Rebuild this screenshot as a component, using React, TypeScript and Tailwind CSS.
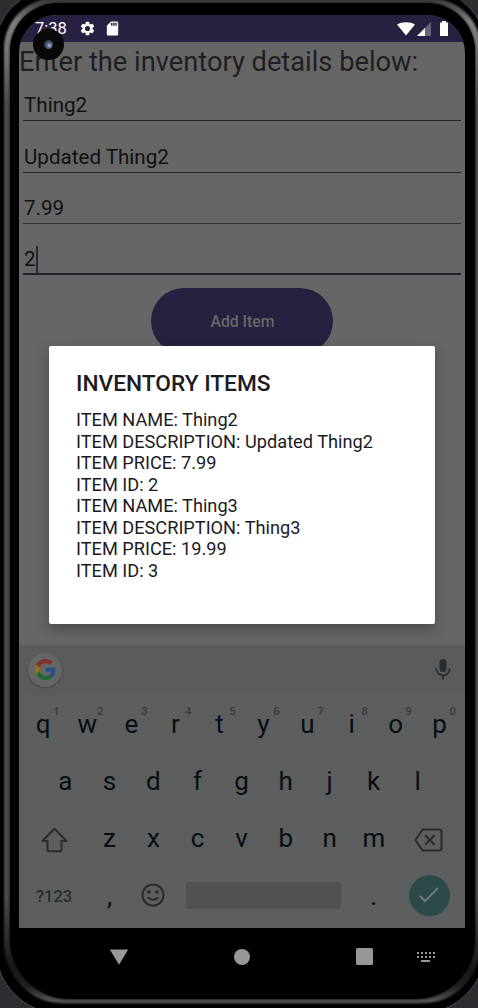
import React from "react";

const details = [
  "ITEM NAME: Thing2",
  "ITEM DESCRIPTION: Updated Thing2",
  "ITEM PRICE: 7.99",
  "ITEM ID: 2",
  "ITEM NAME: Thing3",
  "ITEM DESCRIPTION: Thing3",
  "ITEM PRICE: 19.99",
  "ITEM ID: 3",
];

const Key = ({ c, hint }: { c: string; hint?: string }) => (
  <div className="relative flex h-[57px] w-[44.05px] shrink-0 items-center justify-center text-[26px] leading-none text-[#060f13]">
    <span>{c}</span>
    {hint && <span className="absolute top-[10px] right-[3px] w-3 text-center text-[11.5px] font-medium text-[#393c3d]">{hint}</span>}
  </div>
);

function StatusBar() {
  return (
    <div className="flex h-[27px] shrink-0 items-center bg-[#272040] pr-[17px] pl-[16px] text-white">
      <span className="w-[32px] pt-[2px] text-[16.5px] leading-none">7:38</span>
      <svg className="ml-[12px] h-[17px] w-[17px]" viewBox="0 0 24 24" fill="currentColor">
        <path d="M19.14 12.94c.04-.3.06-.61.06-.94s-.02-.64-.07-.94l2.03-1.58a.49.49 0 0 0 .12-.61l-1.92-3.32a.49.49 0 0 0-.59-.22l-2.39.96a7 7 0 0 0-1.62-.94l-.36-2.54a.48.48 0 0 0-.48-.41h-3.84a.48.48 0 0 0-.47.41l-.36 2.54c-.59.24-1.13.57-1.62.94l-2.39-.96a.49.49 0 0 0-.59.22L2.74 8.87a.48.48 0 0 0 .12.61l2.03 1.58c-.05.3-.09.63-.09.94s.02.64.07.94l-2.03 1.58a.49.49 0 0 0-.12.61l1.92 3.32c.12.22.37.29.59.22l2.39-.96c.5.38 1.03.7 1.62.94l.36 2.54c.05.24.24.41.48.41h3.84c.24 0 .44-.17.47-.41l.36-2.54a7 7 0 0 0 1.62-.94l2.39.96c.22.08.47 0 .59-.22l1.92-3.32a.49.49 0 0 0-.12-.61zM12 15.6a3.6 3.6 0 1 1 0-7.2 3.6 3.6 0 0 1 0 7.2z" />
      </svg>
      <svg className="ml-[8px] h-[17px] w-[17px]" viewBox="0 0 24 24" fill="currentColor">
        <path d="M18 2h-8L4.02 8 4 20c0 1.100.9 2 2 2h12c1.100 0 2-.9 2-2V4c0-1.100-.9-2-2-2zm-6 6h-2V4h2v4zm3 0h-2V4h2v4zm3 0h-2V4h2v4z" />
      </svg>
      <div className="ml-auto flex items-center">
        <svg className="h-[14px] w-[18px]" viewBox="0 0 18 14" fill="currentColor"><path d="M9 13.500 0 2.600C5-.5 13-.5 18 2.600Z" /></svg>
        <svg className="ml-[2px] h-[14px] w-[14px]" viewBox="0 0 14 14"><path d="M0 14 14 0v14Z" fill="#6a637c" /><path d="M0 14 8 6v8Z" fill="white" /></svg>
        <svg className="ml-[9px] h-[15px] w-[8px]" viewBox="0 0 8 15" fill="currentColor"><path d="M2 0h4v1.500h2V15H0V1.500h2Z" /></svg>
      </div>
    </div>
  );
}

const Field = ({ value, line, focused }: { value: string; line: string; focused?: boolean }) => (
  <div className={`mx-[4px] flex h-[51.3px] shrink-0 flex-col justify-end text-[20.6px] leading-[27px] text-[#111] ${line}`}>
    <div className="flex h-[27px] items-center pl-px">
      <span>{value}</span>
      {focused && <span className="h-[27px] w-[2px] bg-[#2b2833]" />}
    </div>
  </div>
);

function Keyboard() {
  return (
    <div className="flex h-[283px] shrink-0 flex-col bg-[#5c5f5e]">
      <div className="flex h-[50px] shrink-0 items-center justify-between bg-[#5a5b5d] pr-[14px] pl-[9px]">
        <div className="flex h-[34px] w-[34px] items-center justify-center rounded-full bg-[#666] shadow-[0_1px_2px_#444]">
          <svg className="h-[21px] w-[21px]" viewBox="0 0 48 48">
            <path fill="#86302a" d="M24 9.500c3.540 0 6.710 1.220 9.210 3.600l6.850-6.850C35.900 2.380 30.470 0 24 0 14.620 0 6.510 5.380 2.560 13.220l7.980 6.190C12.430 13.720 17.740 9.500 24 9.500z" />
            <path fill="#2b4e86" d="M46.980 24.550c0-1.570-.15-3.090-.38-4.550H24v9.020h12.940c-.58 2.960-2.260 5.480-4.780 7.180l7.730 6c4.510-4.180 7.090-10.360 7.090-17.650z" />
            <path fill="#977211" d="M10.530 28.590A14.500 14.500 0 0 1 9.770 24c0-1.600.27-3.140.76-4.590l-7.980-6.190A23.900 23.900 0 0 0 0 24c0 3.880.92 7.540 2.560 10.780z" />
            <path fill="#246836" d="M24 48c6.480 0 11.930-2.130 15.890-5.810l-7.730-6c-2.150 1.450-4.920 2.300-8.160 2.300-6.260 0-11.570-4.220-13.470-9.910l-7.980 6.190C6.510 42.620 14.620 48 24 48z" />
          </svg>
        </div>
        <svg className="h-[21px] w-[16px]" viewBox="0 0 16 21" fill="none">
          <rect x="4.500" y="0" width="7" height="13" rx="3.500" fill="#272d31" />
          <path d="M1.200 9.500a6.800 6.800 0 0 0 13.600 0M8 16v4.500" stroke="#272d31" strokeWidth="1.700" />
        </svg>
      </div>
      <div className="flex h-[58px] items-end pl-[2.200px]">
        {"qwertyuiop".split("").map((c, i) => <Key key={c} c={c} hint={"1234567890"[i]} />)}
      </div>
      <div className="flex justify-center pr-px">
        {"asdfghjkl".split("").map((c) => <Key key={c} c={c} />)}
      </div>
      <div className="flex">
        <div className="flex w-[68.500px] items-center pt-[3px] pl-[22px]">
          <svg className="h-[26px] w-[27px]" viewBox="0 0 27 26" fill="none" stroke="#272d31" strokeWidth="2.1" strokeLinejoin="round"><path d="M13.500 1.800 1.500 14H6.500V23a1.200 1.200 0 0 0 1.200 1.200h11.600A1.200 1.200 0 0 0 20.500 23V14h5Z" /></svg>
        </div>
        {"zxcvbnm".split("").map((c) => <Key key={c} c={c} />)}
        <div className="flex items-center pt-[4px] pl-[18px]">
          <svg className="h-[24px] w-[29px]" viewBox="0 0 29 24" fill="none" stroke="#272d31" strokeWidth="2.1"><path strokeLinejoin="round" d="M8.500 1.500H25.500a2 2 0 0 1 2 2v17a2 2 0 0 1-2 2H8.500L1.500 12Z" /><path d="m10.300 7.200 9.200 9.600m0-9.600-9.200 9.600" transform="translate(1 0)" /></svg>
        </div>
      </div>
      <div className="flex h-[57px] items-center text-[#272d31]">
        <span className="w-[68.500px] pt-[3px] pl-[17px] text-[16.500px] font-medium">?123</span>
        <div className="pt-px"><Key c="," /></div>
        <div className="flex w-[43px] justify-center">
          <svg className="h-[24px] w-[24px]" viewBox="0 0 24 24" fill="none" stroke="currentColor" strokeWidth="2.1"><circle cx="12" cy="12" r="10.500" /><path d="M7 14.200c2 3.200 8 3.200 10 0" /><circle cx="8" cy="9" r=".8" fill="currentColor" /><circle cx="16" cy="9" r=".8" fill="currentColor" /></svg>
        </div>
        <div className="ml-[11px] h-[27px] w-[155px] rounded-[3px] bg-[#505153]" />
        <div className="ml-[11px] pt-px"><Key c="." /></div>
        <div className="ml-[13px] flex h-[41px] w-[41px] items-center justify-center rounded-full bg-[#2c4a47]">
          <svg className="h-[16px] w-[20px]" viewBox="0 0 20 16" fill="none" stroke="#717877" strokeWidth="2"><path d="m1 9 5 5L19 1" /></svg>
        </div>
      </div>
    </div>
  );
}

function NavBar() {
  return (
    <div className="flex h-[56px] shrink-0 items-center pt-px pl-[90px] text-[#979797]">
      <svg className="h-[16px] w-[20px]" viewBox="0 0 20 16" fill="currentColor"><path d="M.8.500h18.400L10 15.800Z" /></svg>
      <div className="ml-[105px] h-[16px] w-[16px] rounded-full bg-[#979797]" />
      <div className="ml-[106px] h-[17px] w-[17px] rounded-[1.500px] bg-[#979797]" />
      <svg className="ml-[43px] h-[11px] w-[19px]" viewBox="0 0 19 11" fill="currentColor">
        <path d="M1 1h2v2H1zM5 1h2v2H5zM9 1h2v2H9zM13 1h2v2h-2zM17 1h2v2h-2zM1 5h2v2H1zM5 5h2v2H5zM9 5h2v2H9zM13 5h2v2h-2zM17 5h2v2h-2zM5 9h9v2H5z" />
      </svg>
    </div>
  );
}

export default function App() {
  return (
    <div className="relative flex h-[1008px] w-[478px] items-start overflow-hidden bg-[#2c2d30] font-['Roboto',sans-serif]">
      <div className="-mt-[10px] -ml-[5px] h-[1024px] w-[491px] shrink-0 rounded-t-[57px] rounded-b-[66px] border border-[#4a4a4a] bg-black pt-[6px] pl-[7px]">
        <div className="h-[1008px] w-[479px] rounded-t-[52px] rounded-b-[62px] bg-[linear-gradient(180deg,#333_0,#808080_25px,#777_55px,#4b4b4b_110px,#4b4b4b_900px,#181818_970px,#222_990px,#555_1004px,#222_1008px)] px-[7px] pt-[6px] shadow-[inset_0_0_2px_1px_#000]">
          <div className="h-[996px] w-[465px] rounded-t-[48px] rounded-b-[60px] bg-black pt-[12px] pl-[9px] shadow-[0_0_3px_#000]">
            <div className="flex w-[446px] flex-col">
              <div className="flex h-[913px] flex-col overflow-hidden rounded-t-[38px] bg-[#666]">
                <StatusBar />
                <h1 className="h-[37px] shrink-0 text-[27.25px] leading-[41px] whitespace-nowrap text-[#1f1f22]">Enter the inventory details below:</h1>
                <Field value="Thing2" line="mt-[-9px] border-b border-[#222] pb-px" />
                <Field value="Updated Thing2" line="border-b border-[#222] pb-px" />
                <Field value="7.99" line="border-b border-[#333] pb-px" />
                <Field value="2" line="border-b-2 border-[#24212e]" focused />
                <button className="mx-auto mt-[12.8px] h-[66px] w-[182px] shrink-0 rounded-full bg-[#272040] pt-px pl-px text-[15.8px] font-medium text-[#686868]">Add Item</button>
                <div className="h-[291px] shrink-0" />
                <Keyboard />
              </div>
              <NavBar />
            </div>
          </div>
        </div>
      </div>
      <div className="absolute top-[29px] left-[33px] flex h-[31px] w-[31px] items-center justify-center rounded-full bg-[#080808]">
        <div className="h-[9px] w-[9px] rounded-full bg-[radial-gradient(circle_at_60%_60%,#b9c4e0_0,#566079_35%,#252934_80%)]" />
      </div>
      <section className="absolute top-[346px] left-[49px] h-[278px] w-[386px] rounded-[2px] bg-white pt-[24px] pl-[27px] text-[#1c1b1f] shadow-[0_5px_14px_rgba(0,0,0,0.3)]">
        <h2 className="text-[22.7px] leading-[28px] font-medium">INVENTORY ITEMS</h2>
        <div className="mt-[11px] text-[18.2px] leading-[21.500px] whitespace-nowrap">
          {details.map((d) => <p key={d}>{d}</p>)}
        </div>
      </section>
    </div>
  );
}
